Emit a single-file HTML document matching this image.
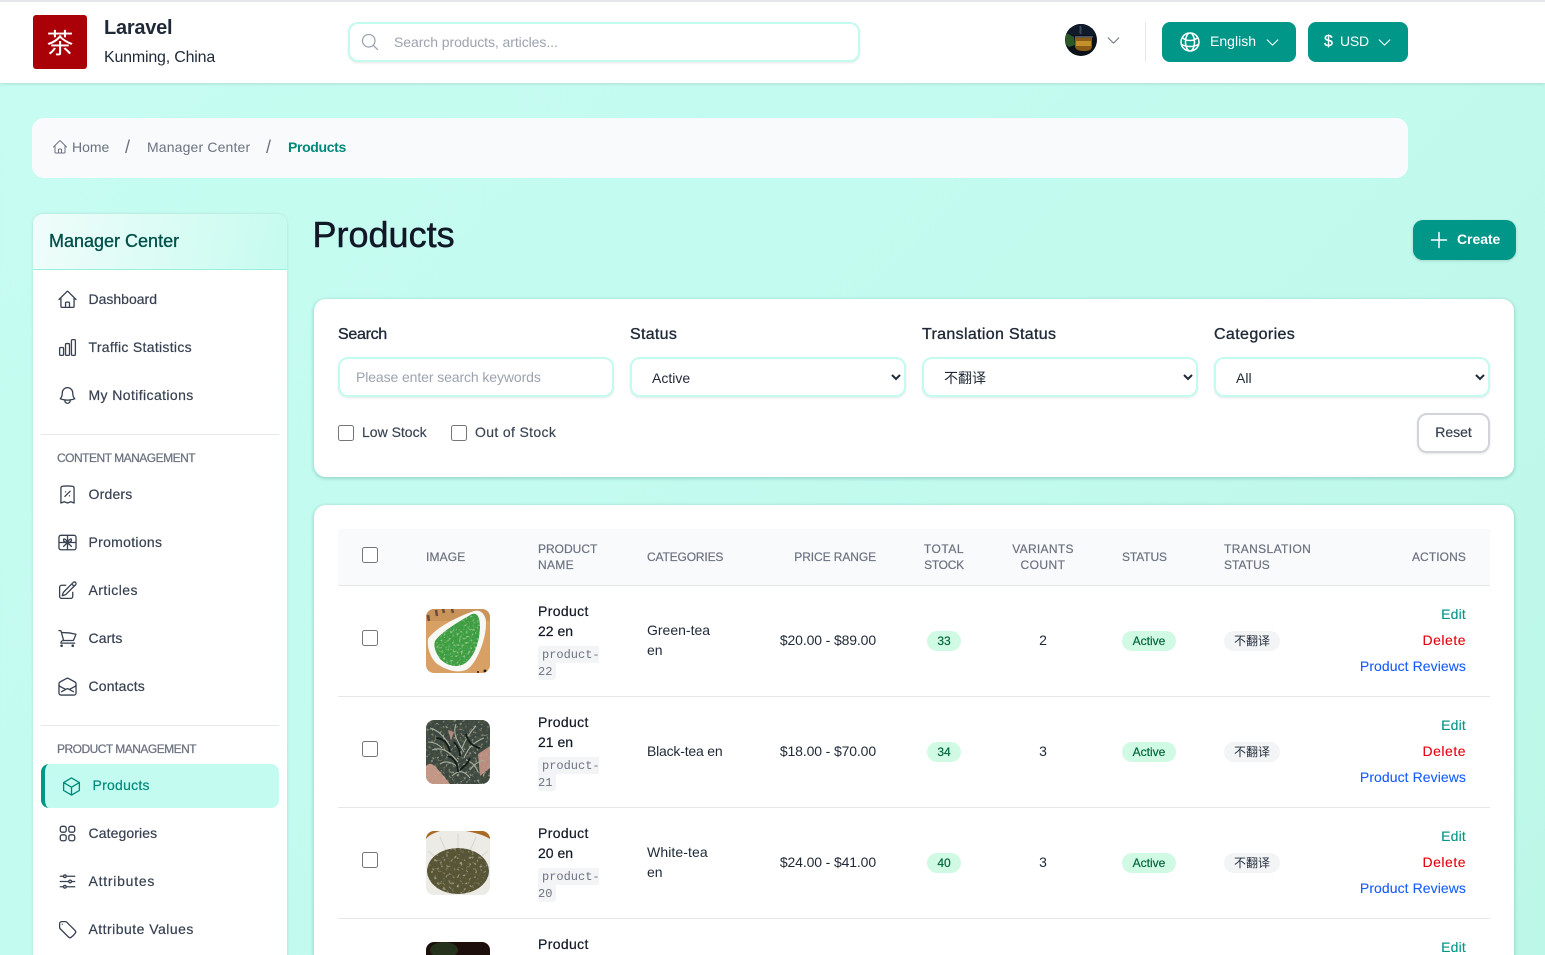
<!DOCTYPE html>
<html lang="en"><head><meta charset="utf-8"><title>Products</title>
<style>
*{box-sizing:border-box}
html,body{margin:0;padding:0;width:1545px;height:955px;overflow:hidden}
body{position:relative;background:linear-gradient(135deg,#c6fcf1 0%,#c4fbf0 40%,#bdf7e8 100%);font-family:"Liberation Sans","Noto Sans CJK SC",sans-serif;font-size:14px;color:#374151}
.a{position:absolute}
.t{position:absolute;white-space:nowrap;line-height:20px;height:20px}
.r{text-align:right}
.c{text-align:center}
svg.i{position:absolute;fill:none;stroke:currentColor;stroke-width:1.5;stroke-linecap:round;stroke-linejoin:round}
.nav{color:#374151;width:21px;height:21px;left:56.5px;margin-top:-.5px}
.nt{left:88.5px;color:#374151;-webkit-text-stroke:.2px #374151}
.sec{left:57px;font-size:12px;color:#6b7280;letter-spacing:-.5px;-webkit-text-stroke:.25px #6b7280}
.lab{font-size:16px;color:#1f2937;-webkit-text-stroke:.35px #1f2937}
.field{position:absolute;top:357px;width:276px;height:40px;border:2px solid #c4fbf0;border-radius:10px;background:#fff;box-shadow:0 1px 2px rgba(0,0,0,.1);font:14px "Liberation Sans","Noto Sans CJK SC",sans-serif;color:#1f2937;padding:0 0 0 16px;outline:none}
select.field{padding-top:2px}
.field::placeholder{color:#9ca3af;letter-spacing:-.1px}
input[type=checkbox]{position:absolute;margin:0;width:16px;height:16px}
.th{font-size:12px;color:#6b7280;line-height:16px;height:16px;-webkit-text-stroke:.2px #6b7280}
.row{position:absolute;left:338px;width:1152px;height:111px;border-bottom:1px solid #e5e7eb}
.b{position:absolute;height:20px;line-height:20px;border-radius:10px;font-size:12px;text-align:center}
.g{background:#d1fae5;color:#00673a;-webkit-text-stroke:.2px #00673a}
.code{position:absolute;font:12px/19px "Liberation Mono",monospace;color:#6b7280;background:#f3f4f6;white-space:nowrap;height:17px}
.pic{position:absolute;left:88px;top:23px;width:64px;height:64px;border-radius:8px;overflow:hidden}
.pic svg{display:block}
.pn{left:200px;color:#111827;-webkit-text-stroke:.2px #111827}
.cat{left:309px;color:#1f2937}
.pr{left:418px;width:120px;top:44px;color:#1f2937;letter-spacing:-.13px}
.act{left:978px;width:150px;-webkit-text-stroke:.1px currentColor}
</style></head><body>

<svg width="0" height="0" style="position:absolute">
<defs>
<symbol id="home" viewBox="0 0 24 24"><path d="M2.25 12l8.954-8.955c.44-.439 1.152-.439 1.591 0L21.75 12M4.5 9.75v10.125c0 .621.504 1.125 1.125 1.125H9.75v-4.875c0-.621.504-1.125 1.125-1.125h2.25c.621 0 1.125.504 1.125 1.125V21h4.125c.621 0 1.125-.504 1.125-1.125V9.75M8.25 21h8.25"/></symbol>
<symbol id="chart" viewBox="0 0 24 24"><path d="M3 13.125C3 12.504 3.504 12 4.125 12h2.25c.621 0 1.125.504 1.125 1.125v6.75C7.5 20.496 6.996 21 6.375 21h-2.25A1.125 1.125 0 013 19.875v-6.75zM9.75 8.625c0-.621.504-1.125 1.125-1.125h2.25c.621 0 1.125.504 1.125 1.125v11.25c0 .621-.504 1.125-1.125 1.125h-2.25a1.125 1.125 0 01-1.125-1.125V8.625zM16.5 4.125c0-.621.504-1.125 1.125-1.125h2.25C20.496 3 21 3.504 21 4.125v15.75c0 .621-.504 1.125-1.125 1.125h-2.25a1.125 1.125 0 01-1.125-1.125V4.125z"/></symbol>
<symbol id="bell" viewBox="0 0 24 24"><path d="M14.857 17.082a23.848 23.848 0 005.454-1.31A8.967 8.967 0 0118 9.75v-.7V9A6 6 0 006 9v.75a8.967 8.967 0 01-2.312 6.022c1.733.64 3.56 1.085 5.455 1.31m5.714 0a24.255 24.255 0 01-5.714 0m5.714 0a3 3 0 11-5.714 0"/></symbol>
<symbol id="receipt" viewBox="0 0 24 24"><path d="M9 14.25l6-6m4.5-3.493V21.75l-3.75-1.5-3.75 1.5-3.75-1.5-3.75 1.5V4.757c0-1.108.806-2.057 1.907-2.185a48.507 48.507 0 0111.186 0c1.1.128 1.907 1.077 1.907 2.185zM9.75 9h.008v.008H9.75V9zm4.5 4.5h.008v.008h-.008V13.5z"/></symbol>
<symbol id="gift" viewBox="0 0 24 24"><path d="M4.5 3.75h15A2.25 2.25 0 0121.75 6v12a2.25 2.25 0 01-2.25 2.25h-15A2.25 2.25 0 012.25 18V6A2.25 2.25 0 014.5 3.75zM12 3.75v16.5M2.25 12h19.5M12 11.5C10 8 7 6.5 7.5 9.5 7.9 11.5 10.500 12 12 11.500zm0 0c2-3.500 5-5 4.500-2-.400 2-3 2.500-4.500 2zM7.500 16.500L12 12l4.500 4.500"/></symbol>
<symbol id="pencil" viewBox="0 0 24 24"><path d="M16.862 4.487l1.687-1.688a1.875 1.875 0 112.652 2.652L10.582 16.07a4.5 4.5 0 01-1.897 1.13L6 18l.8-2.685a4.5 4.5 0 011.13-1.897l8.932-8.931zm0 0L19.5 7.125M18 14v4.75A2.25 2.25 0 0115.75 21H5.25A2.25 2.25 0 013 18.75V8.25A2.25 2.25 0 015.25 6H10"/></symbol>
<symbol id="cart" viewBox="0 0 24 24"><path d="M2.25 3h1.386c.51 0 .955.343 1.087.835l.383 1.437M7.5 14.25a3 3 0 00-3 3h15.75m-12.75-3h11.218c1.121-2.3 2.1-4.684 2.924-7.138a60.114 60.114 0 00-16.536-1.84M7.5 14.25L5.106 5.272M6 20.25a.75.75 0 11-1.5 0 .75.75 0 011.5 0zm12.75 0a.75.75 0 11-1.5 0 .75.75 0 011.5 0z"/></symbol>
<symbol id="mail" viewBox="0 0 24 24"><path d="M21.75 9v.906a2.25 2.25 0 01-1.183 1.981l-6.478 3.488M2.25 9v.906a2.25 2.25 0 001.183 1.981l6.478 3.488m8.839 2.51l-4.66-2.51m0 0l-1.023-.55a2.25 2.25 0 00-2.134 0l-1.022.55m0 0l-4.661 2.51m16.5 1.615a2.25 2.25 0 01-2.25 2.25h-15a2.25 2.25 0 01-2.25-2.25V8.844a2.25 2.25 0 011.183-1.98l7.5-4.04a2.25 2.25 0 012.134 0l7.5 4.04a2.25 2.25 0 011.183 1.98V19.5z"/></symbol>
<symbol id="cube" viewBox="0 0 24 24"><path d="M21 7.500l-9-5.250L3 7.500m18 0l-9 5.250m9-5.250v9l-9 5.250M3 7.500l9 5.250M3 7.500v9l9 5.250m0-9v9"/></symbol>
<symbol id="squares" viewBox="0 0 24 24"><path d="M3.750 6A2.250 2.250 0 016 3.750h2.250A2.250 2.250 0 0110.500 6v2.250a2.250 2.250 0 01-2.250 2.250H6a2.250 2.250 0 01-2.250-2.250V6zM3.750 15.750A2.250 2.250 0 016 13.500h2.250a2.250 2.250 0 012.250 2.250V18a2.250 2.250 0 01-2.250 2.250H6A2.250 2.250 0 013.750 18v-2.250zM13.500 6a2.250 2.250 0 012.250-2.250H18A2.250 2.250 0 0120.250 6v2.250A2.250 2.250 0 0118 10.500h-2.250a2.250 2.250 0 01-2.250-2.250V6zM13.500 15.750a2.250 2.250 0 012.250-2.250H18a2.250 2.250 0 012.250 2.250V18A2.250 2.250 0 0118 20.250h-2.250A2.250 2.250 0 0113.500 18v-2.250z"/></symbol>
<symbol id="sliders" viewBox="0 0 24 24"><path d="M10.500 6h9.750M10.500 6a1.500 1.500 0 11-3 0m3 0a1.500 1.500 0 10-3 0M3.750 6H7.500m3 12h9.750m-9.750 0a1.500 1.500 0 01-3 0m3 0a1.500 1.500 0 00-3 0m-3.750 0H7.500m9-6h3.750m-3.750 0a1.500 1.500 0 01-3 0m3 0a1.500 1.500 0 00-3 0m-9.750 0h9.750"/></symbol>
<symbol id="tag" viewBox="0 0 24 24"><path d="M9.568 3H5.250A2.250 2.250 0 003 5.250v4.318c0 .597.237 1.170.659 1.591l9.581 9.581c.699.699 1.780.872 2.607.330a18.095 18.095 0 005.223-5.223c.542-.827.369-1.908-.330-2.607L11.160 3.660A2.250 2.250 0 009.568 3zM6 6h.008v.008H6V6z"/></symbol>
<symbol id="globe" viewBox="0 0 24 24"><path d="M12 21a9.004 9.004 0 008.716-6.747M12 21a9.004 9.004 0 01-8.716-6.747M12 21c2.485 0 4.500-4.030 4.500-9S14.485 3 12 3m0 18c-2.485 0-4.500-4.030-4.500-9S9.515 3 12 3m0 0a8.997 8.997 0 017.843 4.582M12 3a8.997 8.997 0 00-7.843 4.582m15.686 0A11.953 11.953 0 0112 10.500c-2.998 0-5.740-1.100-7.843-2.918m15.686 0A8.959 8.959 0 0121 12c0 .778-.099 1.533-.284 2.253m0 0A17.919 17.919 0 0112 16.500c-3.162 0-6.133-.815-8.716-2.247m0 0A9.015 9.015 0 013 12c0-1.605.420-3.113 1.157-4.418"/></symbol>
<symbol id="chev" viewBox="0 0 24 24"><path d="M19.500 8.250l-7.500 7.500-7.500-7.500"/></symbol>
<symbol id="search" viewBox="0 0 24 24"><path d="M21 21l-5.197-5.197m0 0A7.500 7.500 0 105.196 5.196a7.500 7.500 0 0010.607 10.607z"/></symbol>
<symbol id="plus" viewBox="0 0 24 24"><path d="M12 4.500v15m7.500-7.500h-15"/></symbol>
<filter id="tex" x="0" y="0" width="100%" height="100%"><feTurbulence type="fractalNoise" baseFrequency=".4" numOctaves="2" seed="4" result="n"/><feColorMatrix in="n" values="0 0 0 0 .06  0 0 0 0 .38  0 0 0 0 .12  2.500 0 0 0 -1.100" result="dk"/><feTurbulence type="fractalNoise" baseFrequency=".45" numOctaves="2" seed="9" result="m"/><feColorMatrix in="m" values="0 0 0 0 .5  0 0 0 0 .8  0 0 0 0 .38  0 2.500 0 0 -1.400" result="lt"/><feMerge result="o"><feMergeNode in="SourceGraphic"/><feMergeNode in="dk"/><feMergeNode in="lt"/></feMerge><feComposite in="o" in2="SourceGraphic" operator="in"/></filter>
<filter id="tex2" x="0" y="0" width="100%" height="100%"><feTurbulence type="fractalNoise" baseFrequency=".3" numOctaves="2" seed="7" result="n"/><feColorMatrix in="n" values="0 0 0 0 .08  0 0 0 0 .09  0 0 0 0 .05  2.500 0 0 0 -1.050" result="dk"/><feTurbulence type="fractalNoise" baseFrequency=".35" numOctaves="2" seed="2" result="m"/><feColorMatrix in="m" values="0 0 0 0 .58  0 0 0 0 .58  0 0 0 0 .42  0 2.500 0 0 -1.500" result="lt"/><feMerge result="o"><feMergeNode in="SourceGraphic"/><feMergeNode in="dk"/><feMergeNode in="lt"/></feMerge><feComposite in="o" in2="SourceGraphic" operator="in"/></filter>
</defs>
</svg>

<!-- header -->
<div class="a" style="left:0;top:0;width:1545px;height:83px;background:#fff;border-top:2px solid #e5e7eb;box-shadow:0 1px 3px rgba(0,0,0,.12)"></div>
<div class="a" style="left:33px;top:15px;width:54px;height:54px;background:#aa0008;border-radius:3px;color:#fff;font:27px/54px 'Noto Sans CJK SC',sans-serif;text-align:center">茶</div>
<div class="t" style="left:104px;top:18px;font-size:20px;font-weight:700;color:#1f2937;letter-spacing:-.25px">Laravel</div>
<div class="t" style="left:104px;top:48px;font-size:16px;color:#1f2937;letter-spacing:-.2px">Kunming, China</div>
<div class="a" style="left:348px;top:22px;width:512px;height:40px;border:2px solid #c4fbf0;border-radius:10px;background:#fff;box-shadow:0 1px 2px rgba(0,0,0,.1)"></div>
<svg class="i" style="left:360px;top:32px;width:20px;height:20px;color:#9ca3af"><use href="#search"/></svg>
<div class="t" style="left:394px;top:32px;color:#9ca3af;letter-spacing:-.07px">Search products, articles...</div>
<svg class="a" style="left:1065px;top:24px" width="32" height="32" viewBox="0 0 32 32">
<defs><clipPath id="av"><circle cx="16" cy="16" r="16"/></clipPath></defs>
<g clip-path="url(#av)"><rect width="32" height="32" fill="#0b1119"/><rect y="0" width="32" height="11" fill="#101a2a"/>
<path d="M1 9l8 4 1 8-6 2-4-3z" fill="#2c5a26"/><path d="M10 13h17v9c0 4-3 5-8 5s-9-1-9-5z" fill="#8a5c16"/><rect x="11" y="17" width="15" height="5" fill="#c4902a"/><rect x="10" y="12" width="18" height="1.500" fill="#4a5566"/><path d="M15 2c2 3-1 5 1 8" stroke="#3a475c" stroke-width="2" fill="none"/></g></svg>
<svg class="i" style="left:1104.500px;top:31.500px;width:17px;height:17px;color:#6b7280"><use href="#chev"/></svg>
<div class="a" style="left:1145px;top:22px;width:1px;height:40px;background:#e5e7eb"></div>
<div class="a" style="left:1162px;top:22px;width:134px;height:40px;background:#009688;border-radius:8px"></div>
<svg class="i" style="left:1178px;top:30px;width:24px;height:24px;color:#fff"><use href="#globe"/></svg>
<div class="t" style="left:1210px;top:31px;color:#fff;font-size:14px;letter-spacing:.02px">English</div>
<svg class="i" style="left:1263.500px;top:33.500px;width:17px;height:17px;color:#fff"><use href="#chev"/></svg>
<div class="a" style="left:1308px;top:22px;width:100px;height:40px;background:#009688;border-radius:8px"></div>
<div class="t" style="left:1324px;top:32px;color:#fff;font-size:16px;-webkit-text-stroke:.3px #fff">$</div>
<div class="t" style="left:1340px;top:31px;color:#fff;font-size:14px;letter-spacing:-.2px">USD</div>
<svg class="i" style="left:1375.500px;top:33.500px;width:17px;height:17px;color:#fff"><use href="#chev"/></svg>

<!-- breadcrumb -->
<div class="a" style="left:32px;top:118px;width:1376px;height:60px;background:#f9fafb;border-radius:12px"></div>
<svg class="i" style="left:52px;top:139px;width:16px;height:16px;color:#6b7280"><use href="#home"/></svg>
<div class="t" style="left:72px;top:137px;color:#6b7280">Home</div>
<div class="t" style="left:125px;top:137px;color:#6b7280;font-size:18px">/</div>
<div class="t" style="left:147px;top:137px;color:#6b7280;letter-spacing:.15px">Manager Center</div>
<div class="t" style="left:266px;top:137px;color:#6b7280;font-size:18px">/</div>
<div class="t" style="left:288px;top:137px;color:#00897b;font-weight:700;letter-spacing:-.35px">Products</div>

<!-- sidebar -->
<div class="a" style="left:33px;top:214px;width:254px;height:760px;background:#fff;border-radius:10px;box-shadow:0 0 3px rgba(0,0,0,.12)"></div>
<div class="a" style="left:33px;top:214px;width:254px;height:56px;background:linear-gradient(100deg,#f0fdfa,#c6fbf0);border-radius:10px 10px 0 0;border-bottom:1px solid #99f0dd"></div>
<div class="t" style="left:49px;top:231px;font-size:18px;color:#00504a;-webkit-text-stroke:.35px #00504a">Manager Center</div>

<svg class="i nav" style="top:289.500px"><use href="#home"/></svg><div class="t nt" style="top:289px">Dashboard</div>
<svg class="i nav" style="top:337.500px"><use href="#chart"/></svg><div class="t nt" style="top:337px;letter-spacing:.3px">Traffic Statistics</div>
<svg class="i nav" style="top:385.500px"><use href="#bell"/></svg><div class="t nt" style="top:385px;letter-spacing:.4px">My Notifications</div>
<div class="a" style="left:41px;top:434px;width:238px;height:1px;background:#e5e7eb"></div>
<div class="t sec" style="top:448px">CONTENT MANAGEMENT</div>
<svg class="i nav" style="top:484.500px"><use href="#receipt"/></svg><div class="t nt" style="top:484px;letter-spacing:.2px">Orders</div>
<svg class="i nav" style="top:532.500px"><use href="#gift"/></svg><div class="t nt" style="top:532px;letter-spacing:.3px">Promotions</div>
<svg class="i nav" style="top:580.500px"><use href="#pencil"/></svg><div class="t nt" style="top:580px;letter-spacing:.45px">Articles</div>
<svg class="i nav" style="top:628.500px"><use href="#cart"/></svg><div class="t nt" style="top:628px;letter-spacing:.1px">Carts</div>
<svg class="i nav" style="top:676.500px"><use href="#mail"/></svg><div class="t nt" style="top:676px;letter-spacing:.15px">Contacts</div>
<div class="a" style="left:41px;top:725px;width:238px;height:1px;background:#e5e7eb"></div>
<div class="t sec" style="top:739px;letter-spacing:-.52px">PRODUCT MANAGEMENT</div>
<div class="a" style="left:41px;top:764px;width:238px;height:44px;background:#c4fbf0;border-left:4px solid #009688;border-radius:8px"></div>
<svg class="i" style="left:60.500px;top:775.500px;width:21px;height:21px;color:#00897b"><use href="#cube"/></svg>
<div class="t" style="left:92.500px;top:775px;color:#00897b;letter-spacing:.25px;-webkit-text-stroke:.2px #00897b">Products</div>
<svg class="i nav" style="top:823.500px"><use href="#squares"/></svg><div class="t nt" style="top:823px;letter-spacing:.1px">Categories</div>
<svg class="i nav" style="top:871.500px"><use href="#sliders"/></svg><div class="t nt" style="top:871px;letter-spacing:.75px">Attributes</div>
<svg class="i nav" style="top:919.500px"><use href="#tag"/></svg><div class="t nt" style="top:919px;letter-spacing:.47px">Attribute Values</div>

<!-- title -->
<div class="t" style="left:312.500px;top:214px;height:42px;line-height:42px;font-size:36px;color:#111827;-webkit-text-stroke:.5px #111827">Products</div>
<div class="a" style="left:1413px;top:220px;width:103px;height:40px;background:#009688;border-radius:10px;box-shadow:0 1px 3px rgba(0,0,0,.15)"></div>
<svg class="i" style="left:1427px;top:228px;width:24px;height:24px;color:#fff"><use href="#plus"/></svg>
<div class="t" style="left:1457px;top:229px;color:#fff;font-weight:700;font-size:14px;letter-spacing:-.05px">Create</div>

<!-- filter card -->
<div class="a" style="left:314px;top:299px;width:1200px;height:178px;background:#fff;border-radius:12px;box-shadow:0 1px 3px 1px rgba(0,110,90,.22)"></div>
<div class="t lab" style="left:338px;top:324px;letter-spacing:-.3px;margin-top:1px">Search</div>
<div class="t lab" style="left:630px;top:324px;letter-spacing:.3px;margin-top:1px">Status</div>
<div class="t lab" style="left:922px;top:324px;letter-spacing:.33px;margin-top:1px">Translation Status</div>
<div class="t lab" style="left:1214px;top:324px;letter-spacing:.38px;margin-top:1px">Categories</div>
<input class="field" style="left:338px" placeholder="Please enter search keywords">
<select class="field" style="left:630px"><option>Active</option></select>
<select class="field" style="left:922px"><option>不翻译</option></select>
<select class="field" style="left:1214px"><option>All</option></select>
<input type="checkbox" style="left:338px;top:425px">
<div class="t" style="left:362px;top:422px;color:#374151;-webkit-text-stroke:.15px #374151">Low Stock</div>
<input type="checkbox" style="left:451px;top:425px">
<div class="t" style="left:475px;top:422px;color:#374151;letter-spacing:.35px;-webkit-text-stroke:.15px #374151">Out of Stock</div>
<div class="a c" style="left:1417px;top:413px;width:73px;height:40px;line-height:34px;border:2px solid #d1d5db;border-radius:10px;background:#fff;color:#374151;box-shadow:0 1px 2px rgba(0,0,0,.1);-webkit-text-stroke:.2px #374151">Reset</div>

<!-- table card -->
<div class="a" style="left:314px;top:505px;width:1200px;height:480px;background:#fff;border-radius:12px;box-shadow:0 1px 3px 1px rgba(0,110,90,.22)"></div>
<div class="a" style="left:338px;top:529px;width:1152px;height:57px;background:#f9fafb;border-bottom:1px solid #e5e7eb"></div>
<input type="checkbox" style="left:362px;top:547px">
<div class="t th" style="left:426px;top:549px;letter-spacing:.15px">IMAGE</div>
<div class="t th" style="left:538px;top:541px;letter-spacing:0">PRODUCT</div><div class="t th" style="left:538px;top:557px;letter-spacing:.3px">NAME</div>
<div class="t th" style="left:647px;top:549px;letter-spacing:-.15px">CATEGORIES</div>
<div class="t th r" style="left:756px;width:120px;top:549px;letter-spacing:-.09px">PRICE RANGE</div>
<div class="t th c" style="left:904px;width:80px;top:541px;letter-spacing:.55px">TOTAL</div><div class="t th c" style="left:904px;width:80px;top:557px;letter-spacing:-.25px">STOCK</div>
<div class="t th c" style="left:993px;width:100px;top:541px;letter-spacing:.3px">VARIANTS</div><div class="t th c" style="left:993px;width:100px;top:557px;letter-spacing:.45px">COUNT</div>
<div class="t th" style="left:1122px;top:549px;letter-spacing:-.1px">STATUS</div>
<div class="t th" style="left:1224px;top:541px;letter-spacing:.37px">TRANSLATION</div><div class="t th" style="left:1224px;top:557px;letter-spacing:.05px">STATUS</div>
<div class="t th r" style="left:1366px;width:100px;top:549px;letter-spacing:.1px">ACTIONS</div>

<!-- row 1 -->
<div class="row" style="top:586px">
<input type="checkbox" style="left:24px;top:44px">
<div class="pic"><svg width="64" height="64" viewBox="0 0 64 64"><rect width="64" height="64" fill="#d9a066"/><rect width="64" height="12" fill="#c9935a"/><path d="M2 6l1 6M10 1l1 6M17 0l1 4M26 0l1 4" stroke="#6a4c38" stroke-width="2.500"/><path d="M2 30C8 20 30 8 48 2 55 0 60 6 60 14 60 30 52 50 44 58 36 66 20 62 10 54 4 48 1 38 2 30z" fill="#f7f7f3"/><path d="M9 32C14 24 30 14 46 5 52 3 54 10 54 18 54 30 50 44 42 52 34 60 22 58 14 50 10 44 7 38 9 32z" fill="#3d9c3a" filter="url(#tex)"/><circle cx="59" cy="62" r="1.500" fill="#2b1d14"/><circle cx="52" cy="63" r="1" fill="#2b1d14"/></svg></div>
<div class="t pn" style="top:15px;letter-spacing:.35px">Product</div>
<div class="t pn" style="top:35px">22 en</div>
<div class="code" style="left:200px;top:60px;width:61px;padding-left:4px;border-radius:3px 0 0 0">product-</div>
<div class="code" style="left:200px;top:77px;width:18px;border-radius:0 0 3px 3px">22</div>
<div class="t cat" style="top:34px">Green-tea</div>
<div class="t cat" style="top:54px">en</div>
<div class="t r pr">$20.00 - $89.00</div>
<div class="b g" style="left:589px;top:45px;width:34px">33</div>
<div class="t c" style="left:675px;width:60px;top:44px;color:#1f2937">2</div>
<div class="b g" style="left:784px;top:45px;width:54px">Active</div>
<div class="b" style="left:886px;top:45px;width:56px;background:#f3f4f6;color:#1f2937">不翻译</div>
<div class="t r act" style="top:18px;color:#009688;letter-spacing:.2px">Edit</div>
<div class="t r act" style="top:44px;color:#e7000b;letter-spacing:.5px">Delete</div>
<div class="t r act" style="top:70px;color:#155dfc;letter-spacing:.07px">Product Reviews</div>
</div>

<!-- row 2 -->
<div class="row" style="top:697px">
<input type="checkbox" style="left:24px;top:44px">
<div class="pic"><svg width="64" height="64" viewBox="0 0 64 64"><rect width="64" height="64" fill="#3a4642" filter="url(#tex2)"/><path d="M0 46c6-6 10 2 16 8l8 10H0z" fill="#d8a492" opacity=".85"/><path d="M52 34l12-8v22l-10 8z" fill="#cf9a8c" opacity=".85"/><path d="M22 10l6 2-3 9z" fill="#c89a8a" opacity=".8"/><g fill="none" stroke="#a9b09f" stroke-width="1.100"><path d="M4 8c8 2 14 8 20 18M30 4c-4 10 2 18 8 28M50 6c-6 6-10 12-14 22M6 30c10-4 18 2 26 12M58 18c-10 4-16 10-20 20M14 44c6-4 14-2 20 6M44 50c4-6 8-8 14-10M26 56c6-6 12-6 18 2M2 22c6 0 10 2 14 6M40 40c6 2 10 6 12 12"/></g><g fill="none" stroke="#141c1a" stroke-width="1.800"><path d="M10 18c8 0 12 6 14 14M40 14c2 8 6 12 14 14M22 36c6 2 10 8 10 16M44 38c-2 6-6 8-10 12M28 22c4 4 6 8 6 14"/></g></svg></div>
<div class="t pn" style="top:15px;letter-spacing:.35px">Product</div>
<div class="t pn" style="top:35px">21 en</div>
<div class="code" style="left:200px;top:60px;width:61px;padding-left:4px;border-radius:3px 0 0 0">product-</div>
<div class="code" style="left:200px;top:77px;width:18px;border-radius:0 0 3px 3px">21</div>
<div class="t cat" style="top:44px;letter-spacing:-.2px">Black-tea en</div>
<div class="t r pr">$18.00 - $70.00</div>
<div class="b g" style="left:589px;top:45px;width:34px">34</div>
<div class="t c" style="left:675px;width:60px;top:44px;color:#1f2937">3</div>
<div class="b g" style="left:784px;top:45px;width:54px">Active</div>
<div class="b" style="left:886px;top:45px;width:56px;background:#f3f4f6;color:#1f2937">不翻译</div>
<div class="t r act" style="top:18px;color:#009688;letter-spacing:.2px">Edit</div>
<div class="t r act" style="top:44px;color:#e7000b;letter-spacing:.5px">Delete</div>
<div class="t r act" style="top:70px;color:#155dfc;letter-spacing:.07px">Product Reviews</div>
</div>

<!-- row 3 -->
<div class="row" style="top:808px">
<input type="checkbox" style="left:24px;top:44px">
<div class="pic"><svg width="64" height="64" viewBox="0 0 64 64"><rect width="64" height="64" fill="#ecebe6"/><path d="M0 0h14C8 2 3 4 0 8zM64 0H40c10 2 18 4 24 8z" fill="#a86a24"/><path d="M14 6l6 14M32 3v15M50 6l-6 14M2 20l10 8M62 20l-10 8" stroke="#d6d5cf" stroke-width="1"/><ellipse cx="32" cy="40" rx="31" ry="23" fill="#5a5532" filter="url(#tex2)"/></svg></div>
<div class="t pn" style="top:15px;letter-spacing:.35px">Product</div>
<div class="t pn" style="top:35px">20 en</div>
<div class="code" style="left:200px;top:60px;width:61px;padding-left:4px;border-radius:3px 0 0 0">product-</div>
<div class="code" style="left:200px;top:77px;width:18px;border-radius:0 0 3px 3px">20</div>
<div class="t cat" style="top:34px;letter-spacing:.1px">White-tea</div>
<div class="t cat" style="top:54px">en</div>
<div class="t r pr">$24.00 - $41.00</div>
<div class="b g" style="left:589px;top:45px;width:34px">40</div>
<div class="t c" style="left:675px;width:60px;top:44px;color:#1f2937">3</div>
<div class="b g" style="left:784px;top:45px;width:54px">Active</div>
<div class="b" style="left:886px;top:45px;width:56px;background:#f3f4f6;color:#1f2937">不翻译</div>
<div class="t r act" style="top:18px;color:#009688;letter-spacing:.2px">Edit</div>
<div class="t r act" style="top:44px;color:#e7000b;letter-spacing:.5px">Delete</div>
<div class="t r act" style="top:70px;color:#155dfc;letter-spacing:.07px">Product Reviews</div>
</div>

<!-- row 4 -->
<div class="row" style="top:919px;border:0">
<div class="pic"><svg width="64" height="64" viewBox="0 0 64 64"><rect width="64" height="64" fill="#1c0f0c"/><ellipse cx="18" cy="8" rx="14" ry="8" fill="#26331c"/></svg></div>
<div class="t pn" style="top:15px;letter-spacing:.35px">Product</div>
<div class="t r act" style="top:18px;color:#009688;letter-spacing:.2px">Edit</div>
</div>

</body></html>
